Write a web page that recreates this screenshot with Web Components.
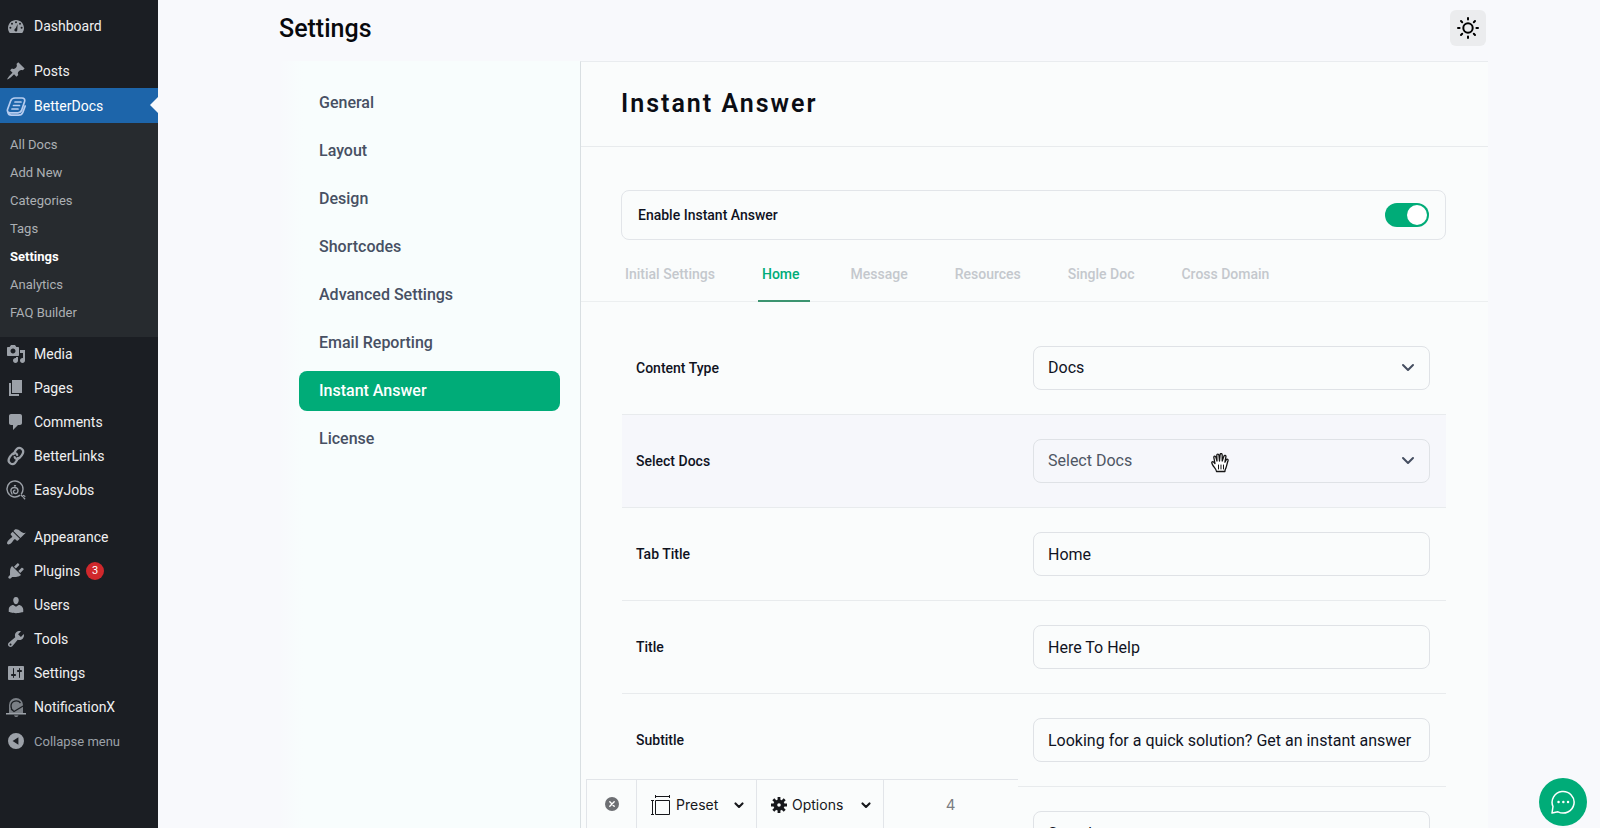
<!DOCTYPE html>
<html lang="en">
<head>
<meta charset="utf-8">
<title>BetterDocs Settings</title>
<style>
  html, body { margin: 0; height: 100%; }
  body {
    overflow: hidden;
    background: #f8f9fc;
    color: #10131f;
    font-family: Roboto, "Noto Sans", sans-serif;
    --accent: #00ac78;
    --line: #e2e5e9;
    --panel: #fafcfc;
    --ink: #10131f;
    --muted: #475063;
  }
</style>
</head>
<body>
<docs-app></docs-app>

<script>
const icons = {
  dashboard: `<path fill-rule="evenodd" d="M3.8 17h12.4c1.1-1.4 1.8-3.1 1.8-5 0-4.4-3.6-8-8-8s-8 3.6-8 8c0 1.9.7 3.6 1.8 5zM10 5.2a1 1 0 1 1 0 2 1 1 0 0 1 0-2zM6 6.8a1 1 0 1 1 0 2 1 1 0 0 1 0-2zM14 6.8a1 1 0 1 1 0 2 1 1 0 0 1 0-2zM4.400 10.7a1 1 0 1 1 0 2 1 1 0 0 1 0-2zM15.6 10.7a1 1 0 1 1 0 2 1 1 0 0 1 0-2zM11.6 8l-.3 6c0 2-2.9 2.1-2.9.1 0-1 .6-1.6 1.3-1.9z"/>`,
  pin: `<path d="M10.44 3.02l1.82-1.82 6.36 6.35-1.83 1.82c-1.05-.68-2.48-.57-3.41.36l-.75.75c-.92.93-1.04 2.35-.35 3.41l-1.83 1.82-2.41-2.41-2.8 2.79c-.42.42-3.38 2.71-3.8 2.29s1.86-3.39 2.28-3.81l2.79-2.79L4.1 9.36l1.83-1.82c1.05.69 2.48.57 3.4-.36l.75-.75c.93-.92 1.05-2.35.36-3.41z"/>`,
  docs: `<g fill="none" stroke="currentColor" stroke-width="1.7" stroke-linecap="round" stroke-linejoin="round"><path d="M9 2h7c2.200 0 3.200 1.600 2.600 3.400l-2.900 8.700c-.6 1.800-1.900 2.700-3.700 2.700H4.200c-2.200 0-3.300-1.600-2.700-3.300L4.600 5C5.300 3 6.900 2 9 2zM1.800 16c.5 2.200 1.700 3.200 3.500 3.200h7.200c2.300 0 3.700-1 4.400-3L19.200 10M9 6h6M7.500 9.500h6M6 13h6"/></g>`,
  media: `<path d="M13 11V4c0-.55-.45-1-1-1h-1.67L9 1H5L3.67 3H2c-.55 0-1 .45-1 1v7c0 .55.45 1 1 1h10c.55 0 1-.45 1-1zM7 4.5c1.38 0 2.5 1.12 2.5 2.5S8.38 9.5 7 9.5 4.5 8.38 4.5 7 5.62 4.5 7 4.5zM14 6h5v10.5c0 1.38-1.12 2.5-2.5 2.5S14 17.88 14 16.5s1.12-2.5 2.5-2.5c.17 0 .34.02.5.05V9h-3V6zm-4 8.05V13h2v3.5c0 1.38-1.12 2.5-2.5 2.5S7 17.88 7 16.5 8.12 14 9.5 14c.17 0 .34.02.5.05z"/>`,
  pages: `<path d="M6 15V2h10v13H6zm-1 1h8v2H3V5h2v11z"/>`,
  comments: `<path d="M5 2h9c1.1 0 2 .9 2 2v7c0 1.1-.9 2-2 2h-2l-5 5v-5H5c-1.1 0-2-.9-2-2V4c0-1.1.9-2 2-2z"/>`,
  link: `<g fill="none" stroke="currentColor" stroke-width="2.2" stroke-linecap="round"><path d="M7.600 8.200C8.500 6 9.500 4.200 10.900 2.900c2.600-2.300 7.600.2 6 4.400-.8 1.900-2 3.400-3.400 4.700-2 1.800-4.500.8-4.900-.9"/><path d="M12 11.800c-.7 2-1.700 3.900-3.100 5.300-2.600 2.300-7.600-.2-6-4.400.8-1.900 2-3.400 3.400-4.700 2-1.800 4.500-.8 4.900.9"/></g>`,
  jobs: `<g fill="none" stroke="currentColor" stroke-width="1.400" stroke-linecap="round"><path d="M13.800 15.400A8 8 0 1 1 17 9c0 1.900-.6 3.600-1.600 5M8.500 5.800h1M6 14c-2.500-4-.7-6.500 2.500-6.500 4.500 0 4.500 6 .9 6-2.700 0-2.400-3.400-.4-3.400"/><path stroke-dasharray="1.500 1.500" d="M15.500 15.500l4 4M17.500 15.500l2.500 1.500"/></g>`,
  appearance: `<path d="M14.48 11.06L7.41 3.99l1.5-1.5c.5-.56 2.3-.47 3.51.32 1.21.8 1.43 1.28 2.91 2.1 1.18.64 2.45 1.26 4.45.85zm-.71.71L6.7 4.7 4.93 6.47c-.39.39-.39 1.02 0 1.41l1.06 1.06c.39.39.39 1.03 0 1.42-.6.6-1.43 1.11-2.21 1.69-.35.26-.7.53-1.01.84C1.43 14.23.4 16.08 1.4 17.07c.99 1 2.84-.03 4.18-1.36.31-.31.58-.66.85-1.02.57-.78 1.08-1.61 1.69-2.21.39-.39 1.02-.39 1.41 0l1.06 1.06c.39.39 1.02.39 1.41 0z"/>`,
  plugins: `<path d="M13.11 4.36L9.87 7.6 8 5.73l3.24-3.24c.35-.34 1.05-.2 1.56.32.52.51.66 1.21.31 1.55zm-8 1.77l.91-1.12 9.01 9.01-1.19.84c-.71.71-2.63 1.16-3.82 1.16H6.14L4.9 17.26c-.59.59-1.54.59-2.12 0-.59-.58-.59-1.53 0-2.12l1.24-1.24v-3.88c0-1.13.4-3.19 1.09-3.89zm7.26 3.97l3.24-3.24c.34-.35 1.04-.21 1.55.31.52.51.66 1.21.31 1.55l-3.24 3.25z"/>`,
  users: `<path d="M10 9.25c-2.27 0-2.73-3.44-2.73-3.44C7 4.02 7.82 2 9.97 2c2.16 0 2.98 2.02 2.71 3.81 0 0-.41 3.44-2.68 3.44zm0 2.57L12.72 10c2.39 0 4.52 2.33 4.52 4.53v2.49s-3.65 1.13-7.24 1.13c-3.65 0-7.24-1.13-7.24-1.13v-2.49c0-2.25 1.94-4.48 4.47-4.48z"/>`,
  tools: `<path d="M16.68 9.77c-1.34 1.34-3.3 1.67-4.95.99l-5.41 6.52c-.99.99-2.59.99-3.58 0s-.99-2.59 0-3.57l6.52-5.42c-.68-1.65-.35-3.61.99-4.95 1.28-1.28 3.12-1.62 4.72-1.06l-2.89 2.89 2.82 2.82 2.86-2.87c.53 1.58.18 3.39-1.08 4.65zM3.81 16.21c.4.39 1.04.39 1.43 0 .4-.4.4-1.04 0-1.43-.39-.4-1.03-.4-1.43 0-.39.39-.39 1.03 0 1.43z"/>`,
  settings: `<path d="M18 16V4c0-.55-.45-1-1-1H3c-.55 0-1 .45-1 1v12c0 .55.45 1 1 1h14c.55 0 1-.45 1-1zM8 11h1c.55 0 1 .45 1 1s-.45 1-1 1H8v1.5c0 .28-.22.5-.5.5s-.5-.22-.5-.5V13H6c-.55 0-1-.45-1-1s.45-1 1-1h1V5.5c0-.28.22-.5.5-.5s.5.22.5.5V11zm5-2h-1c-.55 0-1-.45-1-1s.45-1 1-1h1V5.5c0-.28.22-.5.5-.5s.5.22.5.5V7h1c.55 0 1 .45 1 1s-.45 1-1 1h-1v5.5c0 .28-.22.5-.5.5s-.5-.22-.5-.5V9z"/>`,
  bell: `<path d="M3 16.500V8a7 7 0 0 1 14 0v8.500z" opacity=".75"/><path d="M0 16h20v1.600H0zM8 18.500h4.500c-.6 1.800-3.900 1.800-4.500 0z"/><path fill="none" stroke="#1b1e23" stroke-width="1.300" d="M14.500 6C12 2.500 5 3.500 5 9c0 2.500 1 4 2.500 4.500M5 12l3 2.500L18 8.500"/>`,
  collapse: `<path fill-rule="evenodd" d="M10 2a8 8 0 1 0 0 16 8 8 0 0 0 0-16zm2.400 4.200v7.600L6.600 10z"/>`
};
const chevron = `<svg viewBox="0 0 14 10" fill="none" stroke="currentColor" stroke-width="2" stroke-linecap="round" stroke-linejoin="round" aria-hidden="true"><path d="M2 2l5 5 5-5"/></svg>`;

function define(name, html, setup) {
  const template = document.createElement("template");
  template.innerHTML = html;
  customElements.define(name, class extends HTMLElement {
    constructor() {
      super();
      this.attachShadow({ mode: "open" }).append(template.content.cloneNode(true));
    }
    connectedCallback() { if (setup) setup.call(this, this.shadowRoot); }
  });
}

/* One row of the admin menu: icon, label and an optional trailing badge */
define("menu-item", `
<style>
  :host { display: block; color: #f0f0f1; --icon: #9ca1a8; }
  a { display: flex; align-items: center; gap: 8px; height: 34px; padding-left: 6px; color: inherit; text-decoration: none; font-size: 14px; }
  svg { width: 20px; height: 20px; flex: none; color: var(--icon); fill: currentColor; overflow: visible; }
  :host([current]) { background: #1d65aa; color: #fff; --icon: #b7cdf0; position: relative; }
  :host([current]) a { height: 35px; }
  :host([current])::after { content: ""; position: absolute; right: 0; top: 9px; border: 8px solid transparent; border-left: 0; border-right-color: #f8f9fc; }
  :host([quiet]) { color: #9ca1a8; }
  :host([quiet]) a { font-size: 13px; }
</style>
<a href="#"><svg viewBox="0 0 20 20" aria-hidden="true"></svg><slot></slot></a>`,
function (root) { root.querySelector("svg").innerHTML = icons[this.getAttribute("icon")]; });

define("admin-menu", `
<style>
  :host { display: block; width: 158px; box-sizing: border-box; background: #1b1e23; padding-top: 9px; }
  .gap { margin-top: 11px; }
  ul { list-style: none; margin: 0; padding: 8px 0 10px; background: #272b2f; }
  ul ~ .gap { margin-top: 13px; }
  li a { display: block; padding-left: 10px; font-size: 13px; line-height: 28px; color: #acb0b4; text-decoration: none; }
  li a[aria-current] { color: #fff; font-weight: 700; }
  .badge { display: inline-block; width: 18px; margin-left: -2px; border-radius: 9px; background: #d0282c; color: #fff; font-size: 11px; line-height: 18px; text-align: center; }
</style>
<nav aria-label="Admin">
  <menu-item icon="dashboard">Dashboard</menu-item>
  <menu-item class="gap" icon="pin">Posts</menu-item>
  <menu-item icon="docs" current>BetterDocs</menu-item>
  <ul>
    <li><a href="#">All Docs</a></li>
    <li><a href="#">Add New</a></li>
    <li><a href="#">Categories</a></li>
    <li><a href="#">Tags</a></li>
    <li><a href="#" aria-current="page">Settings</a></li>
    <li><a href="#">Analytics</a></li>
    <li><a href="#">FAQ Builder</a></li>
  </ul>
  <menu-item icon="media">Media</menu-item>
  <menu-item icon="pages">Pages</menu-item>
  <menu-item icon="comments">Comments</menu-item>
  <menu-item icon="link">BetterLinks</menu-item>
  <menu-item icon="jobs">EasyJobs</menu-item>
  <menu-item class="gap" icon="appearance">Appearance</menu-item>
  <menu-item icon="plugins">Plugins <span class="badge">3</span></menu-item>
  <menu-item icon="users">Users</menu-item>
  <menu-item icon="tools">Tools</menu-item>
  <menu-item icon="settings">Settings</menu-item>
  <menu-item icon="bell">NotificationX</menu-item>
  <menu-item icon="collapse" quiet>Collapse menu</menu-item>
</nav>`);

define("page-header", `
<style>
  :host { display: flex; align-items: center; justify-content: space-between; height: 56px; margin-bottom: 5px; }
  h1 { margin: 0; font-size: 25px; font-weight: 500; color: #08090d; }
  button { display: grid; place-items: center; width: 36px; height: 36px; padding: 0; border: 0; border-radius: 6px; background: #ebecee; color: #000; }
</style>
<h1><slot></slot></h1>
<button type="button" aria-label="Switch theme">
  <svg viewBox="0 0 24 24" width="24" height="24" fill="none" stroke="currentColor" stroke-width="2" stroke-linecap="round" aria-hidden="true"><circle cx="12" cy="12" r="4.700"/><path d="M12 2v1.600M12 20.400V22M2 12h1.600M20.400 12H22M5 5l1.200 1.200M17.800 17.800L19 19M5 19l1.200-1.200M17.800 6.200L19 5"/></svg>
</button>`);

define("settings-nav", `
<style>
  :host { display: block; width: 301px; box-sizing: border-box; padding: 22px 20px 0; background: linear-gradient(90deg, #f8f9fc, #f8fdfd 24px); }
  nav { display: grid; gap: 8px; }
  a { padding: 0 20px; border-radius: 8px; font-size: 16px; font-weight: 500; line-height: 40px; color: var(--muted); text-decoration: none; }
  a[aria-current] { background: var(--accent); color: #fff; }
</style>
<nav aria-label="Settings sections">
  <a href="#">General</a>
  <a href="#">Layout</a>
  <a href="#">Design</a>
  <a href="#">Shortcodes</a>
  <a href="#">Advanced Settings</a>
  <a href="#">Email Reporting</a>
  <a href="#" aria-current="page">Instant Answer</a>
  <a href="#">License</a>
</nav>`);

define("toggle-card", `
<style>
  :host { display: block; margin: 0 42px 0 40px; border: 1px solid var(--line); border-radius: 8px; }
  label { display: flex; align-items: center; justify-content: space-between; height: 48px; padding: 0 16px; font-size: 14px; font-weight: 500; }
  input { appearance: none; display: flex; justify-content: flex-end; width: 44px; height: 24px; margin: 0; padding: 2px; box-sizing: border-box; border-radius: 12px; background: var(--accent); }
  input::before { content: ""; width: 20px; height: 20px; border-radius: 50%; background: #fff; }
  input:not(:checked) { justify-content: flex-start; background: #b8bec8; }
</style>
<label><slot></slot><input type="checkbox" role="switch" checked></label>`);

define("settings-tabs", `
<style>
  :host { display: block; border-bottom: 1px solid #eceff0; }
  div { display: flex; gap: 37px; padding-left: 40px; }
  button { height: 62px; padding: 7px 6px 0 4px; margin-bottom: -1px; border: 0; border-bottom: 2px solid transparent; background: none; font: 500 14px/20px Roboto, sans-serif; color: #c4c8cd; }
  [aria-selected=true] { color: var(--accent); border-bottom-color: #3c9470; padding-right: 10px; }
</style>
<div role="tablist">
  <button role="tab">Initial Settings</button>
  <button role="tab" aria-selected="true">Home</button>
  <button role="tab">Message</button>
  <button role="tab">Resources</button>
  <button role="tab">Single Doc</button>
  <button role="tab">Cross Domain</button>
</div>`);

/* Label on the left half, a select or text box on the right half */
define("field-row", `
<style>
  :host { display: grid; grid-template-columns: 1fr 1fr; align-items: center; height: 92px; padding: 0 16px 0 14px; border-bottom: 1px solid #e8ebed; position: relative; }
  :host([hovered]) { background: #f6f7fb; }
  label { font-size: 14px; font-weight: 500; }
  .box { display: grid; align-items: center; }
  .box > * { grid-area: 1 / 1; }
  select, input { appearance: none; width: 100%; height: 44px; box-sizing: border-box; margin: 0; padding: 0 14px; border: 1px solid #dfe2e6; border-radius: 8px; background: transparent; color: var(--ink); font: 400 16px/20px Roboto, sans-serif; }
  :host([hovered]) select { color: #4e5664; }
  svg { width: 14px; height: 10px; justify-self: end; margin-right: 15px; color: #454e60; pointer-events: none; }
</style>
<label for="control"></label>
<div class="box"></div>
<slot></slot>`,
function (root) {
  const label = root.querySelector("label");
  const value = this.getAttribute("value");
  const box = root.querySelector(".box");
  label.textContent = this.getAttribute("label");
  if (this.hasAttribute("select")) {
    box.innerHTML = `<select id="control"><option></option></select>${chevron}`;
    box.querySelector("option").textContent = value;
  } else {
    box.innerHTML = `<input id="control" type="text">`;
    box.querySelector("input").value = value;
  }
});

define("settings-panel", `
<style>
  :host { display: block; flex: 1; border: 1px solid #e9ecef; border-width: 1px 0 0 1px; border-left-color: #d9dfe2; background: var(--panel); }
  h2 { margin: 0 0 43px; padding-left: 40px; border-bottom: 1px solid #e8ebed; font-size: 25px; font-weight: 600; line-height: 84px; letter-spacing: 2px; color: #0b0d14; }
  .rows { margin: 20px 42px 0 41px; }
  .hand { position: absolute; right: 217px; top: 38px; width: 18px; height: 20px; }
</style>
<h2>Instant Answer</h2>
<toggle-card>Enable Instant Answer</toggle-card>
<settings-tabs></settings-tabs>
<div class="rows">
  <field-row label="Content Type" value="Docs" select></field-row>
  <field-row label="Select Docs" value="Select Docs" select hovered>
    <svg class="hand" viewBox="0 0 18 20" fill="#fff" stroke="#151515" stroke-width="1.300" stroke-linecap="round" stroke-linejoin="round" aria-hidden="true"><path d="M5.500 18.500c-.2-2.500-2.300-4-3.600-6.200-1.400-2.300-1.500-3.600-.2-3.600.8 0 1.500.8 2.300 1.800L2.900 4.800c-.4-2 1.500-2.300 2-.6L6 8 5.800 2.600c0-2 2-2 2.200 0L8.500 8l.6-6.300c.2-1.700 2.100-1.500 2.100.2L11.200 8l1.700-4.800c.6-1.500 2.300-1 2 .7l-1 5.300 1.300-2.300c.8-1.300 2.200-.6 1.800.8-1 3-1.400 5.400-2.100 7.300-.5 1.300-1 2-1 3.500z"/><path d="M7.500 12v4M10 12v4M12.500 12v4" stroke-width="1"/></svg>
  </field-row>
  <field-row label="Tab Title" value="Home"></field-row>
  <field-row label="Title" value="Here To Help"></field-row>
  <field-row label="Subtitle" value="Looking for a quick solution? Get an instant answer"></field-row>
  <field-row label="" value="Search"></field-row>
</div>`);

/* Recording toolbar that floats over the bottom edge of the page */
define("capture-bar", `
<style>
  :host { position: fixed; left: 586px; bottom: 0; display: flex; height: 49px; width: 432px; box-sizing: border-box; border: 1px solid var(--line); border-width: 1px 0 0 1px; background: var(--panel); }
  button { display: flex; align-items: center; gap: 5px; box-sizing: border-box; height: 100%; margin: 0; padding: 2px 12px 0 14px; border: 0; border-right: 1px solid var(--line); background: none; color: #16171b; font: 400 14px/20px Inter, sans-serif; }
  .close { width: 50px; padding: 0; justify-content: center; }
  .preset { width: 120px; }
  .options { width: 127px; }
  .end { margin-left: auto; }
  .end svg { display: block; width: 10px; height: 7px; stroke-width: 3px; }
  output { flex: 1; padding-right: 1px; text-align: center; font: 400 15px/49px Inter, sans-serif; color: #7b7d82; }
</style>
<button class="close" type="button" aria-label="Close"><svg viewBox="0 0 14 14" width="14" height="14" aria-hidden="true"><circle cx="7" cy="7" r="7" fill="#6d6f73"/><path d="M4.800 4.800l4.400 4.400M9.200 4.800L4.800 9.200" stroke="#fff" stroke-width="1.400" stroke-linecap="round"/></svg></button>
<button class="preset" type="button"><svg viewBox="0 0 20 20" width="20" height="20" fill="none" stroke="currentColor" aria-hidden="true"><path d="M4.500 5.500h14v14h-14zM5 1.500h13M4.500 0v3M18.500 0v3M1.500 5v15M0 5.500h3M0 19.500h3"/></svg>Preset<span class="end">${chevron}</span></button>
<button class="options" type="button"><svg viewBox="0 0 16 16" width="16" height="16" fill="none" stroke="currentColor" aria-hidden="true"><circle cx="8" cy="8" r="3.700" stroke-width="3.800"/><path stroke-width="2.800" d="M8 0v3M8 13v3M0 8h3M13 8h3M2.300 2.300l2.200 2.200M11.500 11.500l2.200 2.200M2.300 13.700l2.200-2.200M11.500 4.500l2.200-2.200"/></svg>Options<span class="end">${chevron}</span></button>
<output>4</output>`);

define("chat-button", `
<style>
  :host { position: fixed; right: 13px; bottom: 2px; }
  button { display: grid; place-items: center; width: 48px; height: 48px; padding: 0; border: 0; border-radius: 50%; background: var(--accent); color: #fff; }
</style>
<button type="button" aria-label="Open chat"><svg viewBox="0 0 24 24" width="24" height="24" fill="none" stroke="currentColor" stroke-width="1.500" stroke-linejoin="round" aria-hidden="true"><path d="M1 23l1-6.500A11 10.800 0 1 1 7 21.800z"/><path d="M7.500 12h.1M12.300 12h.1M17 12h.1" stroke-width="2.400" stroke-linecap="round"/></svg></button>`);

define("docs-app", `
<style>
  :host { display: flex; height: 100%; overflow: hidden; }
  admin-menu { flex: none; }
  main { flex: 1; display: flex; flex-direction: column; min-width: 0; padding: 0 112px 0 121px; }
  page-header { flex: none; margin-right: 2px; }
  .body { flex: 1; display: flex; }
  settings-nav { flex: none; }
</style>
<admin-menu></admin-menu>
<main>
  <page-header>Settings</page-header>
  <div class="body">
    <settings-nav></settings-nav>
    <settings-panel></settings-panel>
  </div>
</main>
<capture-bar></capture-bar>
<chat-button></chat-button>`);
</script>
</body>
</html>
